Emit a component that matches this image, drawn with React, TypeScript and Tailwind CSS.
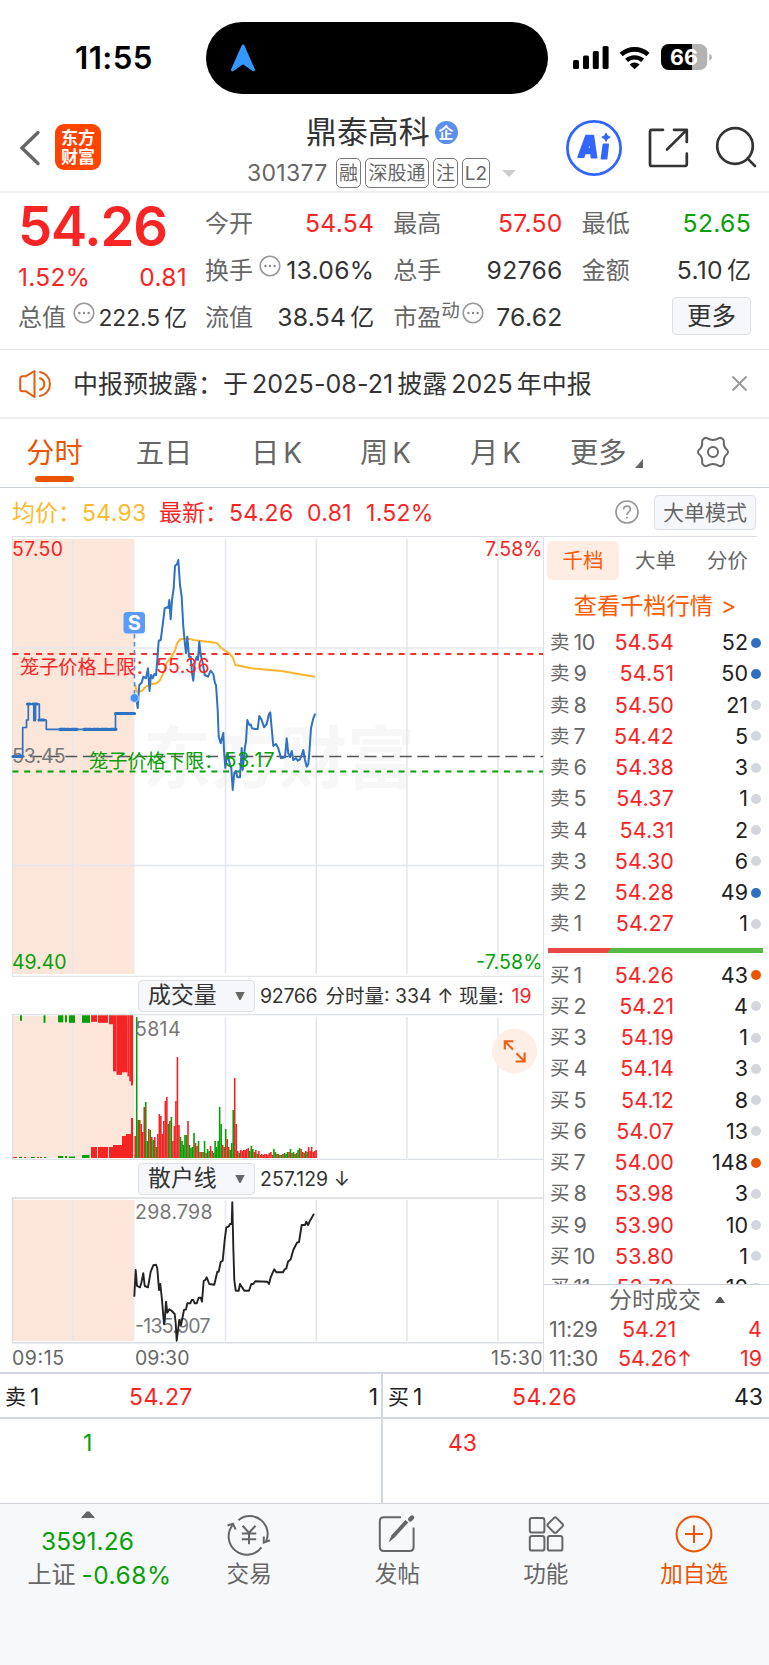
import React from "react";

type Level = { label: string; price: string; volume: string; dot: string };

const GRAY = "bg-[#d3d6dc]";
const BLUE = "bg-[#2f6fc2]";
const ORANGE = "bg-[#ea5504]";

const sells: Level[] = [
  { label: "卖10", price: "54.54", volume: "52", dot: BLUE },
  { label: "卖9", price: "54.51", volume: "50", dot: BLUE },
  { label: "卖8", price: "54.50", volume: "21", dot: GRAY },
  { label: "卖7", price: "54.42", volume: "5", dot: GRAY },
  { label: "卖6", price: "54.38", volume: "3", dot: GRAY },
  { label: "卖5", price: "54.37", volume: "1", dot: GRAY },
  { label: "卖4", price: "54.31", volume: "2", dot: GRAY },
  { label: "卖3", price: "54.30", volume: "6", dot: GRAY },
  { label: "卖2", price: "54.28", volume: "49", dot: BLUE },
  { label: "卖1", price: "54.27", volume: "1", dot: GRAY },
];

const buys: Level[] = [
  { label: "买1", price: "54.26", volume: "43", dot: ORANGE },
  { label: "买2", price: "54.21", volume: "4", dot: GRAY },
  { label: "买3", price: "54.19", volume: "1", dot: GRAY },
  { label: "买4", price: "54.14", volume: "3", dot: GRAY },
  { label: "买5", price: "54.12", volume: "8", dot: GRAY },
  { label: "买6", price: "54.07", volume: "13", dot: GRAY },
  { label: "买7", price: "54.00", volume: "148", dot: ORANGE },
  { label: "买8", price: "53.98", volume: "3", dot: GRAY },
  { label: "买9", price: "53.90", volume: "10", dot: GRAY },
  { label: "买10", price: "53.80", volume: "1", dot: GRAY },
  { label: "买11", price: "53.79", volume: "10", dot: GRAY },
];

// chart data
const preMarket =
  "M13 756.5H22.7V727.5H26.5V720H28.3V704H33.8V720H35.4V704H39.3V720H46.3V729.3H115.5V713.5H135";
const priceLine =
  "134.5,698 136.5,700 137.7,708 139.3,685 141.7,682.7 143.3,676.7 146,678.3 148,668.3 149.5,691 151,675 152.7,678.3 154.3,674 156,675.3 157.3,660 158.7,640.7 160.7,640 162.7,625 164.7,608.3 167.3,607.3 168.3,608 169.3,600 170.7,619.3 172,600 173.7,588 175,565.7 177,564.3 178.3,560 180,585 181.7,596.7 183.3,626.7 185,645 186,653 187.3,636.7 189,656.7 190.7,656.7 192,673 193.3,680.7 194.7,663 196.7,656.7 198,660 199.3,641.7 200.7,655 202.7,663 204.7,675 208,676.7 210.7,670.7 213.3,674 215,683.3 216,685 217.7,710 218.7,736.7 220.7,743.3 223.3,733 224,750 225.3,768 227.3,753 230,765 231.3,768 232.7,790 234.3,773 236,771 237.3,777.3 240,777.3 241.7,748 242.7,770 245,746.7 246,741.7 247.3,720 249.3,725 250.7,724.5 252,728.3 255,729 257.7,729 259.3,716 261.7,720 264,727.3 266.7,724 269,714 270.3,712.3 271.7,728.3 273.3,746 276,744 278.3,748.3 281,758.3 285,757.3 286.7,738.3 288.3,753.3 290,757 291.7,751 293.3,760 296,758 297.7,760.7 300,759.3 301.7,755 303.3,750 305,760 306.7,766.7 308.3,764 309.3,753.3 311,728.3 313.3,718.3 315.3,713.7";
const averageLine =
  "135,684 136.7,691.7 141.7,691 145.7,686.7 151.7,684 156.7,683.3 160,680 163.3,673.3 166.7,663 171.7,656.7 175,650 177.3,642.7 180.7,639 188.3,638.7 195,640.3 210,642 216.7,643 221.7,648.3 229.3,653.3 232.7,657.3 235.3,665 251.7,668.3 283.3,671.3 298.3,674 315,676.7";
const retailLine =
  "134.3,1296.7 135.7,1270 137,1286 140,1287.3 141.3,1283 143.3,1273.3 144.7,1286 148,1287.3 150.7,1271.7 153.3,1265.3 156,1264.7 157.3,1268.3 159,1290 160.3,1284 162,1300 164,1324 165,1317 166,1301.7 167.3,1312.7 169.3,1309.3 171.3,1310.5 174.7,1314 175.7,1323 176.7,1340.7 179.3,1320 181,1325 184,1310 186,1309.3 187.3,1303.3 190.3,1303.3 191.7,1300 193.3,1300 194.7,1303.3 196.7,1303.3 198.7,1297.7 200.7,1297.7 202,1301.7 203.7,1281 205.3,1280 206.7,1277.3 209.3,1284 214.3,1284.7 217.3,1271.7 218.7,1271.7 220.7,1262 222.7,1260.7 224.7,1240 226.3,1227.3 228.7,1226.7 230,1224 231.7,1224 232.3,1202.3 233.3,1246.7 234.3,1280 235.7,1290.7 238.7,1290.7 240,1284 241.7,1286.7 244.3,1290.7 249,1290.7 251.3,1284 253.3,1284 255.3,1281.3 267.3,1281.7 269,1284 270.7,1277.3 272.7,1272.7 274.3,1269.3 276.3,1272.3 283,1272.3 284.7,1269.3 286.3,1268.5 288,1261.7 290.7,1259.3 293.3,1250 295.3,1246 297,1242.7 299,1242 301.7,1225 305,1225 306.3,1221.7 308,1225 310,1220.7 314,1213.7";

// one entry per minute: colour + height
const minuteVolume =
  "r22 g141 g38 r38 r34 r26 r51 g56 g17 r29 g28 r21 g18 r21 g11 r24 r44 r42 r24 r37 r57 r61 g34 r37 g41 r17 r32 r57 r101 r33 g21 g17 g13 g23 g23 r37 g13 g10 g11 g25 r15 r12 g17 r6 r6 g6 g17 r5 g9 g7 r12 r7 g5 g17 g11 g17 g51 g34 r13 r11 g29 r19 r11 g8 g15 g48 r80 r34 r7 g5 r8 r7 r8 r8 r9 r10 g7 g12 g9 r6 r8 g4 r7 r3 r4 r3 r4 r4 r3 r5 r6 r3 g9 g6 r4 g4 r3 g3 r4 g5 g4 g6 r6 g9 r5 g6 g4 r5 g8 g10 r9 r6 g5 r7 g6 r11 r7 r11 r6 r7 r8".split(
    " ",
  );

// x, width, height, colour
const auctionTop: [number, number, number, string][] = [
  [20, 2, 5.5, "g"],
  [43.5, 2, 7.5, "g"],
  [58, 5.3, 7, "g"],
  [65, 2, 7, "g"],
  [69, 6, 7.5, "g"],
  [82, 8, 7.5, "g"],
  [91, 6, 6.5, "r"],
  [98, 10, 7.5, "r"],
  [109, 4, 9, "r"],
  [113, 3.5, 56, "r"],
  [116.5, 5.5, 59.5, "r"],
  [122, 5.5, 57, "r"],
  [127.5, 1.8, 61, "r"],
  [129.3, 1.7, 66, "r"],
  [131, 2, 70, "r"],
];
const auctionBottom: [number, number, number, string][] = [
  [13, 4, 1, "r"],
  [19, 3, 1, "g"],
  [24, 2, 1, "r"],
  [31, 4, 1, "g"],
  [37, 2, 1, "r"],
  [40, 2, 1, "g"],
  [44, 2, 1, "g"],
  [58, 5.3, 2, "g"],
  [65, 2, 2, "g"],
  [69, 6, 1.5, "g"],
  [82, 7.5, 3, "g"],
  [91, 6, 11, "r"],
  [98, 10, 11, "r"],
  [109, 4, 11, "r"],
  [113, 9, 13, "r"],
  [122, 4, 22, "r"],
  [126, 5, 24, "r"],
  [131, 2, 40, "r"],
];

const barColor = (c: string) => (c === "r" ? "#f52323" : "#06a006");

function MoreDots() {
  return (
    <svg width="22" height="22" viewBox="0 0 22 22" fill="none" className="shrink-0">
      <circle cx="11" cy="11" r="9.8" stroke="#999" strokeWidth="1.6" />
      <circle cx="6.4" cy="11" r="1.2" fill="#888" />
      <circle cx="11" cy="11" r="1.2" fill="#888" />
      <circle cx="15.6" cy="11" r="1.2" fill="#888" />
    </svg>
  );
}

function StatusBar() {
  return (
    <div className="flex h-[102px] shrink-0 items-start">
      <div className="w-[206px] pl-[75px] pt-[38px] text-[31.3px] font-semibold leading-[40px] tracking-[0.4px] text-black">
        11:55
      </div>
      <div className="mt-[22px] flex h-[72px] w-[342px] items-center rounded-full bg-black pl-[24px]">
        <svg width="26" height="28" viewBox="0 0 26 28">
          <path
            d="M13 2L23.5 25.8L13 18.6L2.5 25.8Z"
            fill="#3399ff"
            stroke="#3399ff"
            strokeWidth="3"
            strokeLinejoin="round"
          />
        </svg>
      </div>
      <svg className="ml-[24px] mt-[42px]" width="146" height="30" viewBox="572 42 146 30">
        <rect x="573" y="60" width="6" height="9" rx="1.6" />
        <rect x="583" y="55.6" width="6" height="13.4" rx="1.6" />
        <rect x="592.8" y="51" width="6" height="18" rx="1.6" />
        <rect x="602.6" y="46" width="6" height="23" rx="1.6" />
        <path d="M621.2 54.5A20 20 0 0 1 648 54.5" fill="none" stroke="#000" strokeWidth="4.6" />
        <path d="M626.6 60.4A12 12 0 0 1 642.6 60.4" fill="none" stroke="#000" strokeWidth="4.4" />
        <path d="M629.6 64.4A7.2 7.2 0 0 1 639.6 64.4L634.6 69.3Z" />
        <clipPath id="battery">
          <rect x="661" y="44" width="46.5" height="26" rx="8" />
        </clipPath>
        <g clipPath="url(#battery)">
          <rect x="661" y="44" width="46.5" height="26" fill="#b3b3b3" />
          <rect x="661" y="44" width="31" height="26" fill="#000" />
        </g>
        <path d="M709.3 53.5Q712 55 712 57.2Q712 59.5 709.3 61Z" fill="#b3b3b3" />
        <text x="684" y="64.8" textAnchor="middle" fontSize="21.5" fontWeight="700" fill="#fff">
          66
        </text>
      </svg>
    </div>
  );
}

function Tag({ children, width }: { children: React.ReactNode; width: string }) {
  return (
    <span
      className={`flex h-[30px] shrink-0 items-center justify-center whitespace-nowrap rounded-[5px] border border-[#777] text-[19px] leading-none text-[#666] ${width}`}
    >
      {children}
    </span>
  );
}

function Header() {
  return (
    <div className="flex h-[91px] shrink-0 items-start border-b-2 border-[#eee]">
      <svg className="ml-[18px] mt-[27px]" width="24" height="38" viewBox="0 0 24 38" fill="none">
        <path d="M20 3.5L4 19L20 34.5" stroke="#666" strokeWidth="3.4" strokeLinecap="round" />
      </svg>
      <div className="ml-[13px] mt-[22px] h-[46px] w-[46px] rounded-[9px] bg-[#ff4400] pt-[5px] text-center text-[17px] font-bold leading-[18.5px] text-white">
        <div>东方</div>
        <div>财富</div>
      </div>
      <div className="ml-[146px] mt-[7px] w-[291px]">
        <div className="flex h-[46px] items-center pl-[59px]">
          <span className="text-[30.9px] leading-[46px] text-[#333]">鼎泰高科</span>
          <span className="ml-[5px] flex h-[23px] w-[23px] items-center justify-center rounded-full bg-[#5c8eec] text-[15px] font-bold leading-none text-white">
            企
          </span>
        </div>
        <div className="mt-[3px] flex items-center gap-[4px]">
          <span className="mr-[3px] w-[82px] text-[23px] leading-[30px] tracking-[0.3px] text-[#666]">
            301377
          </span>
          <Tag width="w-[25px]">融</Tag>
          <Tag width="w-[64px]">深股通</Tag>
          <Tag width="w-[25px]">注</Tag>
          <Tag width="w-[28px]">L2</Tag>
          <svg className="ml-[8px]" width="14" height="7" viewBox="0 0 14 7">
            <path d="M0 0H14L7 7Z" fill="#ccc" />
          </svg>
        </div>
      </div>
      <svg className="ml-[26px] mt-[16px] shrink-0" width="204" height="60" viewBox="564 118 204 60" fill="none">
        <circle cx="594" cy="148" r="26.6" stroke="#3366ff" strokeWidth="2.8" />
        <g fill="#3366ff" stroke="#3366ff" strokeWidth="1.6" strokeLinejoin="round">
          <path
            fillRule="evenodd"
            d="M578 157.2L586 135.6H593.4L596.6 157.6H591.4L591 153.4H585L583.6 157.2ZM587.2 148.6H590.6L590 142.2Z"
          />
          <path d="M603.4 144.4H608.2L606.6 158.8H601.4Z" />
          <path d="M606 133.6L607.2 136L609.6 137.2L607.2 138.4L606 140.8L604.8 138.4L602.4 137.2L604.8 136Z" />
        </g>
        <g stroke="#333" strokeWidth="2.7" strokeLinecap="round" strokeLinejoin="round">
          <path d="M663 129.8H652Q650 129.8 650 131.8V164Q650 166 652 166H684.6Q686.8 166 686.8 164V153.5" />
          <path d="M674 129.8H686.8V142M686 130.6L667 149.5" />
          <circle cx="735" cy="146" r="17.8" />
          <path d="M747.4 158.4L755 166" />
        </g>
      </svg>
    </div>
  );
}

function Stat({
  label,
  value,
  unit,
  color = "text-[#333]",
  icon = false,
  sup,
}: {
  label: string;
  value: string;
  unit?: string;
  color?: string;
  icon?: boolean;
  sup?: string;
}) {
  return (
    <div className="flex h-[47px] items-center justify-between whitespace-nowrap leading-[47px]">
      <span className="flex items-center text-[24px] text-[#666]">
        {label}
        {sup && <span className="mb-[14px] text-[18.5px]">{sup}</span>}
        {icon && (
          <span className={sup ? "mb-[10px] ml-[2px]" : "mb-[10px] ml-[6px]"}>
            <MoreDots />
          </span>
        )}
      </span>
      <span className={`text-[24.7px] tracking-[0.3px] ${color}`}>
        {value}
        {unit && <span className="ml-[4px] text-[24px] tracking-normal">{unit}</span>}
      </span>
    </div>
  );
}

function Quote() {
  return (
    <div className="flex h-[157px] shrink-0 gap-[18px] border-b border-[#ddd] pl-[18px] pr-[18px]">
      <div className="w-[169px]">
        <div className="h-[66px] text-[54.3px] font-semibold leading-[67px] tracking-[-1.1px] text-[#f92424]">
          54.26
        </div>
        <div className="flex h-[35px] justify-between text-[24.5px] leading-[37px] tracking-[0.3px] text-[#f92424]">
          <span>1.52%</span>
          <span>0.81</span>
        </div>
        <div className="flex h-[47px] items-center justify-between whitespace-nowrap leading-[47px]">
          <span className="text-[24px] text-[#666]">总值</span>
          <span className="mb-[10px] ml-[3px]">
            <MoreDots />
          </span>
          <span className="text-[22.8px] text-[#333]">
            222.5<span className="ml-[4px]">亿</span>
          </span>
        </div>
      </div>
      <div className="grid flex-1 grid-cols-3 content-start gap-x-[19px] pt-[7px]">
        <Stat label="今开" value="54.54" color="text-[#f92424]" />
        <Stat label="最高" value="57.50" color="text-[#f92424]" />
        <Stat label="最低" value="52.65" color="text-[#06a006]" />
        <Stat label="换手" value="13.06%" icon />
        <Stat label="总手" value="92766" />
        <Stat label="金额" value="5.10" unit="亿" />
        <Stat label="流值" value="38.54" unit="亿" />
        <Stat label="市盈" value="76.62" sup="动" icon />
        <div className="flex h-[47px] items-center justify-end">
          <button className="mb-[4px] h-[38px] w-[79px] rounded-[4px] border border-[#dcdfe5] bg-[#f6f7fa] text-[24.5px] leading-[36px] text-[#333]">
            更多
          </button>
        </div>
      </div>
    </div>
  );
}

function Notice() {
  return (
    <div className="flex h-[69px] shrink-0 items-center border-b-2 border-[#eee] pl-[19px] pr-[21px]">
      <svg width="34" height="30" viewBox="0 0 34 30" fill="none" stroke="#ea5a0c" strokeWidth="2" strokeLinecap="round" strokeLinejoin="round">
        <path d="M15.5 2V28L7 22.3H3.5Q1.2 22.3 1.2 20V10.5Q1.2 7.2 3.5 7.2H7Z" />
        <path d="M21 3A12.2 12.2 0 0 1 21 27M21 9.3A6 6 0 0 1 21 20.8" />
      </svg>
      <div className="ml-[20px] flex gap-[4px] whitespace-nowrap text-[25px] leading-[60px] text-[#333]">
        <span>中报预披露：于</span>
        <span className="tracking-[0.1px]">2025-08-21</span>
        <span>披露</span>
        <span>2025</span>
        <span>年中报</span>
      </div>
      <svg className="ml-auto" width="17" height="17" viewBox="0 0 17 17">
        <path d="M1.5 1.5L15.5 15.5M15.5 1.5L1.5 15.5" stroke="#999" strokeWidth="1.9" />
      </svg>
    </div>
  );
}

function Tabs() {
  const periods = [
    { unit: "日", width: "w-[115px]" },
    { unit: "周", width: "w-[103px]" },
    { unit: "月", width: "w-[117px]" },
  ];
  return (
    <div className="flex h-[69px] shrink-0 whitespace-nowrap border-b border-[#ccd0d8] text-[28.3px] leading-[69px] text-[#666]">
      <div className="flex w-[109px] flex-col items-center text-[#ea5504]">
        <span className="h-[57px]">分时</span>
        <span className="h-[6px] w-[39px] rounded-full bg-[#ea5504]" />
      </div>
      <span className="w-[110px] text-center">五日</span>
      {periods.map(({ unit, width }) => (
        <span key={unit} className={`flex justify-center gap-[4px] ${width}`}>
          <span>{unit}</span>
          <span className="text-[28px]">K</span>
        </span>
      ))}
      <span className="ml-[16px] flex w-[110px]">
        更多
        <svg className="ml-[8px] mt-[40px]" width="8" height="9" viewBox="0 0 8 9">
          <path d="M8 0V9H0Z" fill="#666" />
        </svg>
      </span>
      <svg className="ml-[16px] mt-[16px]" width="34" height="34" viewBox="-17 -17 34 34" fill="none" stroke="#666" strokeWidth="2">
        <circle r="5" />
        <path
          strokeLinejoin="round"
          d="M-9 -13.5Q-7.5 -14.6 -6 -13.8Q0 -10.4 6 -13.8Q7.5 -14.6 9 -13.5L10 -12.6Q11 -11.8 10.8 -10.2Q10.4 -4.6 14.2 -2Q15 -1 15 0Q15 1 14.2 2Q10.4 4.6 10.8 10.2Q11 11.8 10 12.6L9 13.5Q7.5 14.6 6 13.8Q0 10.4 -6 13.8Q-7.5 14.6 -9 13.5L-10 12.6Q-11 11.8 -10.8 10.2Q-10.4 4.6 -14.2 2Q-15 1 -15 0Q-15 -1 -14.2 -2Q-10.4 -4.6 -10.8 -10.2Q-11 -11.8 -10 -12.6Z"
        />
      </svg>
    </div>
  );
}

function Legend() {
  return (
    <div className="flex h-[48px] shrink-0 items-center whitespace-nowrap pl-[12px] pr-[13px] text-[23px] leading-[48px] tracking-[0.3px] text-[#f92424]">
      <span className="w-[70px] pt-px tracking-normal text-[#feb92e]">均价：</span>
      <span className="w-[77px] pt-px text-[#feb92e]">54.93</span>
      <span className="w-[70px] pt-px tracking-normal">最新：</span>
      <span className="w-[78px] pt-px">54.26</span>
      <span className="w-[59px] pt-px">0.81</span>
      <span className="pt-px">1.52%</span>
      <svg className="ml-auto" width="24" height="24" viewBox="0 0 24 24" fill="none" stroke="#999" strokeWidth="1.7">
        <circle cx="12" cy="12" r="11" />
        <path d="M8.6 9.6Q8.6 6.2 12 6.2Q15.4 6.2 15.4 9.2Q15.4 11 13.4 12.2Q12 13.2 12 15" />
        <path d="M12 16.8V18.6" />
      </svg>
      <button className="ml-[15px] h-[35px] w-[102px] rounded-[4px] border border-[#dcdfe5] bg-[#f6f7fa] text-[21px] leading-[33px] tracking-normal text-[#666]">
        大单模式
      </button>
    </div>
  );
}

function GridLines({ top, bottom }: { top: number; bottom: number }) {
  return (
    <g stroke="#e4e7ee" strokeWidth="1.6">
      {[73, 225.5, 316.3, 407, 498].map((x) => (
        <line key={x} x1={x} x2={x} y1={top} y2={bottom} />
      ))}
    </g>
  );
}

function PriceChart() {
  return (
    <svg className="block h-[441px] w-[544px]" viewBox="0 536 544 441" fontSize="19.5">
      <rect x="13" y="539" width="121.5" height="435" fill="#fce6da" />
      <text x="143" y="783" fontSize="68" fontWeight="700" fill="#f7f7f8">
        东方财富
      </text>
      <GridLines top={539} bottom={974} />
      <path d="M13 648H543M13 865.5H543" stroke="#e4e7ee" strokeWidth="1.4" />
      <path d="M12.5 536V977M12 536.5H544M12 976.3H544" stroke="#dcdfe5" strokeWidth="1" />
      <path d="M12.5 756.5H543" stroke="#555" strokeWidth="1.6" strokeDasharray="12 5.6" />
      <path d="M12.5 654H543" stroke="#f52f2f" strokeWidth="2" strokeDasharray="6 5.7" />
      <path d="M12.5 771.5H543" stroke="#06a006" strokeWidth="2" strokeDasharray="6 5.7" />
      <text x="12" y="762.7" fill="#777">53.45</text>
      <polyline points={averageLine} fill="none" stroke="#fdb52c" strokeWidth="2" strokeLinejoin="round" />
      <g fill="none" stroke="#2f72c2" strokeLinejoin="round">
        <path d={preMarket} strokeWidth="1.7" />
        <path
          d="M13 756.5H22M34.6 704V720M27.5 704H30M33 704H37M39 720H44M60 729.3H66M67 729.3H69M71 729.3H77M84 729.3H91M93 729.3H99M101 729.3H108M110 729.3H116M115.5 713.5H134.5"
          strokeWidth="3.2"
          strokeLinecap="round"
        />
        <polyline points={priceLine} strokeWidth="2" />
      </g>
      <path d="M134.5 634V694" stroke="#4a8ff0" strokeWidth="1.6" strokeDasharray="4.5 3.5" />
      <circle cx="134.5" cy="698" r="4.3" fill="#4a8ff0" stroke="#b9d4fb" strokeWidth="1" />
      <rect x="123.5" y="612" width="21.5" height="21.5" rx="3.5" fill="#5b9cfb" />
      <text x="134.3" y="630" textAnchor="middle" fontSize="20" fontWeight="700" fill="#fff">S</text>
      <g fill="#f92424">
        <text x="12" y="555.6" textLength="51">57.50</text>
        <text x="542.5" y="555.6" textAnchor="end" textLength="57.5">7.58%</text>
        <text x="20" y="674" fontSize="19.2">笼子价格上限：</text>
        <text x="156" y="673" textLength="53.5">55.36</text>
      </g>
      <g fill="#06a006">
        <text x="12" y="969" textLength="54.5">49.40</text>
        <text x="542.5" y="969" textAnchor="end" textLength="66.5">-7.58%</text>
        <text x="89" y="768" fontSize="19.2">笼子价格下限：</text>
        <text x="224.5" y="767" textLength="50">53.17</text>
      </g>
    </svg>
  );
}

function IndicatorBar({ name, children }: { name: string; children: React.ReactNode }) {
  return (
    <div className="flex h-[37px] w-[544px] items-center whitespace-nowrap pl-[138px] text-[19.5px] leading-[37px] text-[#333]">
      <button className="mr-[5px] flex h-[32px] w-[117px] items-center justify-between rounded-[4px] border border-[#dcdfe5] bg-[#f6f7fa] pl-[9px] pr-[9px] text-[22.9px] leading-[31px]">
        {name}
        <svg width="10" height="8" viewBox="0 0 10 8">
          <path d="M0.3 0H9.7L5.6 8H4.4Z" fill="#666" />
        </svg>
      </button>
      <div className="pt-[2px]">{children}</div>
    </div>
  );
}

function VolumeChart() {
  return (
    <svg className="block h-[146px] w-[544px]" viewBox="0 1014 544 146" fontSize="19.5">
      <rect x="13" y="1016" width="121.5" height="142" fill="#fce6da" />
      <GridLines top={1017} bottom={1158} />
      <path d="M12.5 1014V1159M12 1014.7H544M12 1159.4H544" stroke="#dcdfe5" strokeWidth="1.2" />
      {auctionTop.map(([x, w, h, c]) => (
        <rect key={x} x={x} y="1015.3" width={w} height={h} fill={barColor(c)} />
      ))}
      {auctionBottom.map(([x, w, h, c]) => (
        <rect key={x} x={x} y={1158 - h} width={w} height={h} fill={barColor(c)} />
      ))}
      {minuteVolume.map((v, i) => {
        const h = Number(v.slice(1));
        return (
          <rect
            key={i}
            x={134.4 + i * 1.508}
            y={1158 - h}
            width="1.6"
            height={h}
            fill={barColor(v[0])}
          />
        );
      })}
      <text x="135" y="1036.3" fill="#777" textLength="45.5">5814</text>
      <circle cx="514.5" cy="1051" r="22.5" fill="#fdeee6" />
      <path
        d="M513 1049.5L504.8 1041.3M504.8 1049.5V1041.3H513.4M516.4 1053.3L524.6 1061.5M524.6 1052.6V1061.5H515.6"
        fill="none"
        stroke="#ee5f13"
        strokeWidth="2.1"
      />
    </svg>
  );
}

function RetailChart() {
  return (
    <svg className="block h-[175px] w-[544px]" viewBox="0 1197 544 175" fontSize="19.5" fill="#777">
      <rect x="13" y="1200" width="121.5" height="141" fill="#fce6da" />
      <GridLines top={1200} bottom={1341} />
      <path d="M12.5 1197V1342M12 1198H544M12 1342.7H544" stroke="#d9dce3" strokeWidth="1.5" />
      <text x="135" y="1219.3" textLength="77.5">298.798</text>
      <text x="135" y="1332.8" textLength="75.5">-135.907</text>
      <polyline points={retailLine} fill="none" stroke="#222" strokeWidth="1.9" strokeLinejoin="round" />
      <text x="12" y="1365" textLength="52" fill="#666">09:15</text>
      <text x="135" y="1365" textLength="54.5" fill="#666">09:30</text>
      <text x="542.5" y="1365" textAnchor="end" textLength="51.5" fill="#666">15:30</text>
    </svg>
  );
}

function LevelRow({ level }: { level: Level }) {
  return (
    <div className="flex h-[31.25px] shrink-0 items-center whitespace-nowrap pl-[6px] pr-[8px] text-[21.5px] leading-[31px]">
      <span className="flex gap-[4px] text-[#666]">
        <span className="text-[19.5px]">{level.label[0]}</span>
        <span className="tracking-[-0.4px]">{level.label.slice(1)}</span>
      </span>
      <span className="ml-auto tracking-[0.1px] text-[#f92424]">{level.price}</span>
      <span className="w-[74px] text-right text-[#222]">{level.volume}</span>
      <span className={`ml-[3px] h-[10px] w-[10px] rounded-full ${level.dot}`} />
    </div>
  );
}

function OrderBook() {
  return (
    <div className="flex h-full min-w-0 flex-1 flex-col border-l border-[#dcdfe5]">
      <div className="mr-[12px] flex h-[50px] shrink-0 items-start whitespace-nowrap border-t border-[#dcdfe5] pl-[3px] pt-[4px] text-[20.5px] leading-[39px] text-[#666]">
        <span className="w-[72px] rounded-[5px] bg-[#ffede4] text-center text-[#ff5a00]">千档</span>
        <span className="w-[73px] text-center">大单</span>
        <span className="w-[58px] pl-[15px]">分价</span>
      </div>
      <div className="flex h-[41px] shrink-0 justify-center gap-[8px] pr-[3px] text-[23.2px] leading-[41px] text-[#ff5a00]">
        <span>查看千档行情</span>
        <span>&gt;</span>
      </div>
      {sells.map((level) => (
        <LevelRow key={level.label} level={level} />
      ))}
      <div className="mb-[6.5px] ml-[4px] mr-[6px] mt-[8.5px] flex h-[5px] shrink-0 bg-[#58b946]">
        <div className="h-full w-[63px] bg-[#ea4848] [clip-path:polygon(0_0,100%_0,94%_100%,0_100%)]" />
      </div>
      <div className="h-[324.5px] shrink-0 overflow-hidden">
        {buys.map((level) => (
          <LevelRow key={level.label} level={level} />
        ))}
      </div>
      <div className="flex h-[31px] shrink-0 items-center justify-center gap-[14px] border-t border-[#ccd0da] pl-[21px] text-[23px] leading-[30px] text-[#666]">
        分时成交
        <svg width="10" height="6" viewBox="0 0 10 6">
          <path d="M0 6H10L6 0H4Z" fill="#555" />
        </svg>
      </div>
      <div className="grid h-[56px] shrink-0 grid-cols-[69px_80px_1fr] pl-[5px] pr-[7px] text-[21.5px] leading-[28.5px] text-[#f92424]">
        <span className="tracking-[-0.3px] text-[#666]">11:29</span>
        <span className="pl-[4px]">54.21</span>
        <span className="text-right">4</span>
        <span className="tracking-[-0.3px] text-[#666]">11:30</span>
        <span className="flex items-center">
          54.26
          <svg className="ml-[1px]" width="13" height="16" viewBox="0 0 12 16" fill="none">
            <path d="M6 16V1.5M1 6.5L6 1.3L11 6.5" stroke="#f92424" strokeWidth="1.7" />
          </svg>
        </span>
        <span className="text-right">19</span>
      </div>
    </div>
  );
}

function Depth() {
  const sides = [
    { label: "卖", price: "54.27", volume: "1", queue: "1", color: "text-[#06a006]", pad: "pl-[5px] pr-[3px]", q: "pl-[83px]" },
    { label: "买", price: "54.26", volume: "43", queue: "43", color: "text-[#f92424]", pad: "pl-[5px] pr-[6px]", q: "pl-[65px]" },
  ];
  return (
    <div className="flex h-[131px] shrink-0 border-t-2 border-[#d3d7df] text-[23px] text-[#222]">
      {sides.map((side, i) => (
        <div key={side.label} className={i === 0 ? "w-[383px] border-r-2 border-[#d3d7df]" : "flex-1"}>
          <div className={`flex h-[45px] items-center border-b-2 border-[#d3d7df] leading-[42px] ${side.pad}`}>
            <span className="flex w-[124px] gap-[4px] pt-[3px]">
              <span className="text-[21px]">{side.label}</span>1
            </span>
            <span className="pt-[3px] tracking-[0.4px] text-[#f92424]">{side.price}</span>
            <span className="ml-auto pt-[3px]">{side.volume}</span>
          </div>
          <div className={`leading-[49px] ${side.color} ${side.q}`}>{side.queue}</div>
        </div>
      ))}
    </div>
  );
}

function NavItem({ label, color = "text-[#666]", children }: { label: string; color?: string; children: React.ReactNode }) {
  return (
    <div className={`flex w-[148.3px] flex-col items-center ${color}`}>
      <svg className="mt-[8px]" width="44" height="44" viewBox="0 0 44 44" fill="none" stroke="currentColor" strokeWidth="2">
        {children}
      </svg>
      <span className="text-[22.6px] leading-[36px]">{label}</span>
    </div>
  );
}

function BottomNav() {
  return (
    <div className="flex flex-1 border-t border-[#d0d4da] bg-[#f7f8fa]">
      <div className="flex w-[175px] flex-col items-center pt-[7px] text-[24.5px]">
        <svg width="14" height="7" viewBox="0 0 14 7">
          <path d="M0 7H14L8.5 0.5H5.5Z" fill="#666" />
        </svg>
        <span className="mt-[6px] leading-[34px] tracking-[0.1px] text-[#06a006]">3591.26</span>
        <span className="flex gap-[6px] whitespace-nowrap pl-[24px] leading-[34px]">
          <span className="text-[24px] text-[#666]">上证</span>
          <span className="tracking-[0.5px] text-[#06a006]">-0.68%</span>
        </span>
      </div>
      <NavItem label="交易">
        <path d="M11.4 8.2A17.9 17.9 0 0 1 38.8 30M34.5 35.4A17.9 17.9 0 0 1 5.3 13.5M0.5 13.5L6 11.8L8.6 17.5M36.8 24.6V30.6L43 28.3" />
        <path d="M15.5 13.8L22 20.8L28.5 13.8M14.8 21.5H29.2M14.8 27.3H29.2M22 20.8V32.2" />
      </NavItem>
      <NavItem label="发帖">
        <path d="M26 5.2H9Q4.8 5.2 4.8 9.5V35Q4.8 39 9 39H34.5Q38.6 39 38.6 35V15.5" />
        <path d="M32.5 10.5L19 25.3L15 28.6L17 23.5L30.5 8.8Z" fill="currentColor" strokeWidth="1.2" />
        <path d="M35.2 7.4L37 5.6" strokeWidth="4.4" strokeLinecap="round" />
      </NavItem>
      <NavItem label="功能">
        <rect x="5.8" y="6" width="14.6" height="14.6" rx="2.2" />
        <rect x="5.8" y="24" width="14.6" height="14.6" rx="2.2" />
        <rect x="23.8" y="24" width="14.6" height="14.6" rx="2.2" />
        <rect x="25.2" y="7.2" width="12" height="12" rx="2" transform="rotate(45 31.2 13.2)" />
      </NavItem>
      <NavItem label="加自选" color="text-[#ea5504]">
        <circle cx="22" cy="22" r="17.4" />
        <path d="M22 13.2V31M13 22H31" />
      </NavItem>
    </div>
  );
}

export default function App() {
  return (
    <div className="flex h-[1665px] w-[769px] flex-col overflow-hidden bg-white font-['Inter','Noto_Sans_CJK_SC',sans-serif]">
      <StatusBar />
      <Header />
      <Quote />
      <Notice />
      <Tabs />
      <Legend />
      <div className="flex h-[836px] shrink-0">
        <div className="w-[543px] shrink-0">
          <PriceChart />
          <IndicatorBar name="成交量">
            <span className="tracking-[-0.3px]">92766</span>
            <span className="ml-[8px]">分时量: 334 ↑ 现量:</span>
            <span className="ml-[8px] text-[#f92424]">19</span>
          </IndicatorBar>
          <VolumeChart />
          <IndicatorBar name="散户线">257.129 ↓</IndicatorBar>
          <RetailChart />
        </div>
        <OrderBook />
      </div>
      <Depth />
      <BottomNav />
    </div>
  );
}
